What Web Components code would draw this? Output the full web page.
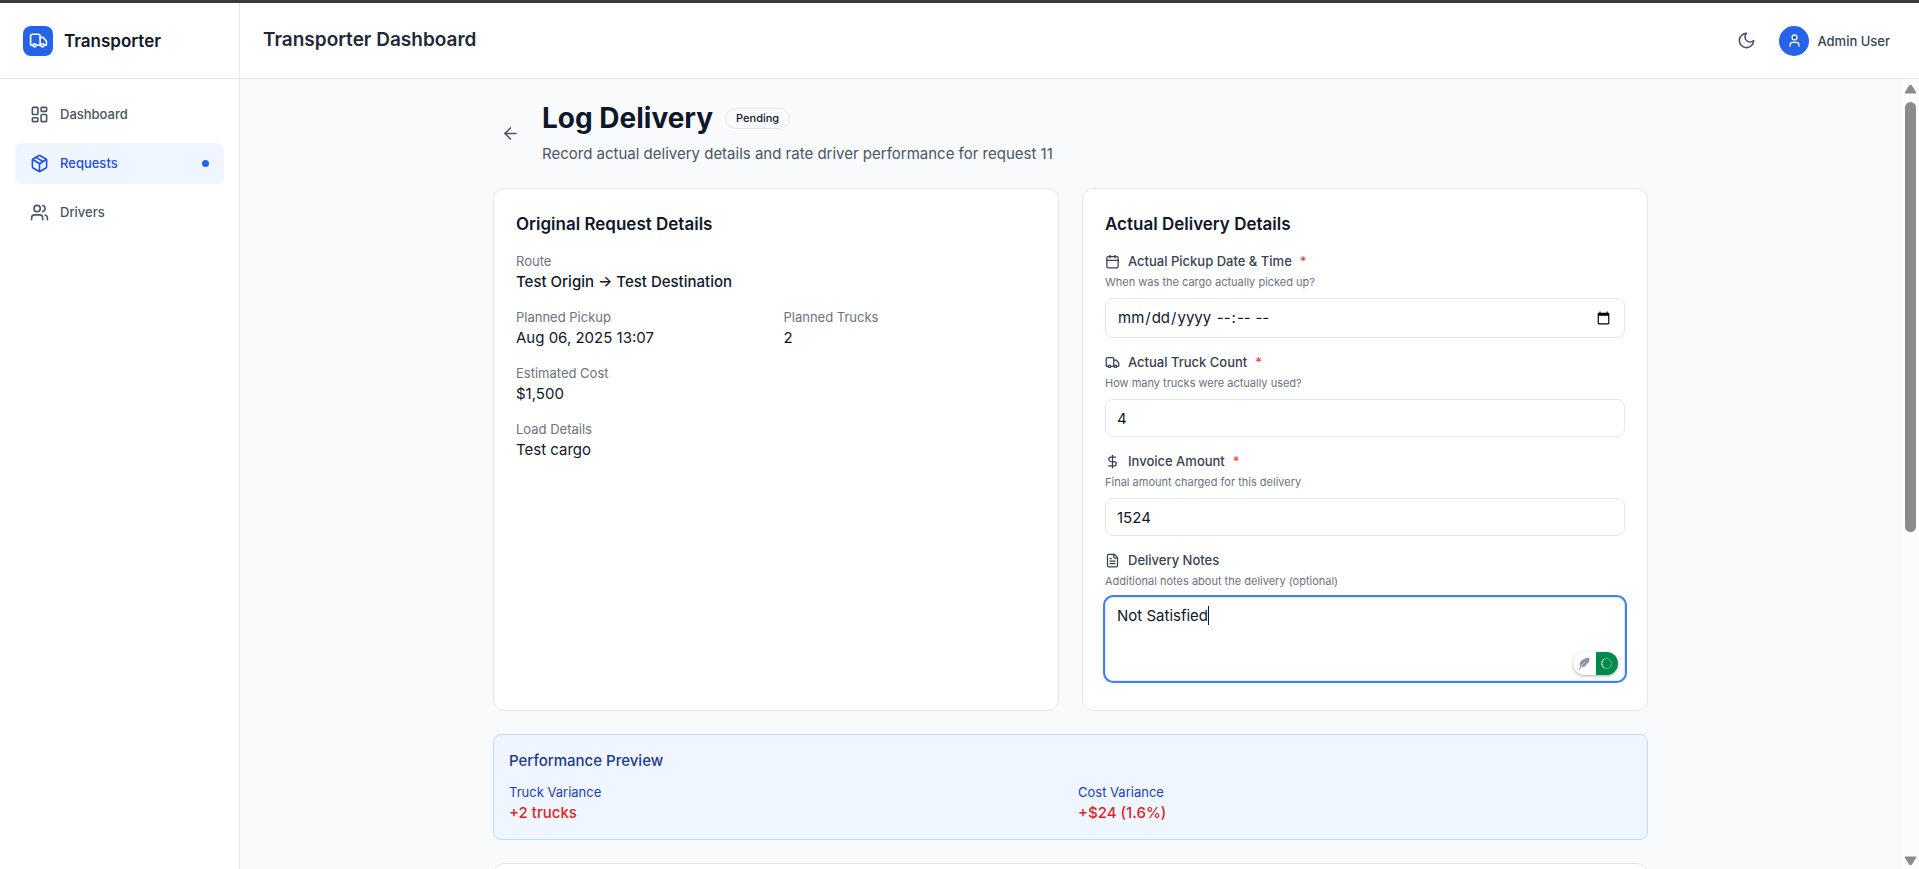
<!DOCTYPE html>
<html lang="en">
<head>
<meta charset="utf-8">
<title>Transporter Dashboard</title>
<style>
  html, body { margin: 0; height: 100%; overflow: hidden; }
  body { font: 15px/22px Inter, "Liberation Sans", sans-serif; color: #0f172a; background: #f8fafc; }
</style>
</head>
<body>
<transporter-app></transporter-app>
<script>
const ICONS = {
  truck: '<path d="M14 18V6a2 2 0 0 0-2-2H4a2 2 0 0 0-2 2v11a1 1 0 0 0 1 1h2"/><path d="M15 18H9"/><path d="M19 18h2a1 1 0 0 0 1-1v-3.65a1 1 0 0 0-.22-.624l-3.48-4.35A1 1 0 0 0 17.52 8H14"/><circle cx="17" cy="18" r="2"/><circle cx="7" cy="18" r="2"/>',
  dashboard: '<rect width="7" height="9" x="3" y="3" rx="1"/><rect width="7" height="5" x="14" y="3" rx="1"/><rect width="7" height="9" x="14" y="12" rx="1"/><rect width="7" height="5" x="3" y="16" rx="1"/>',
  box: '<path d="M11 21.73a2 2 0 0 0 2 0l7-4A2 2 0 0 0 21 16V8a2 2 0 0 0-1-1.73l-7-4a2 2 0 0 0-2 0l-7 4A2 2 0 0 0 3 8v8a2 2 0 0 0 1 1.73z"/><path d="M12 22V12"/><path d="m3.3 7 7.7 4.73a2 2 0 0 0 2 0L20.7 7"/><path d="m7.5 4.27 9 5.15"/>',
  users: '<path d="M16 21v-2a4 4 0 0 0-4-4H6a4 4 0 0 0-4 4v2"/><circle cx="9" cy="7" r="4"/><path d="M22 21v-2a4 4 0 0 0-3-3.87"/><path d="M16 3.13a4 4 0 0 1 0 7.75"/>',
  user: '<path d="M19 21v-2a4 4 0 0 0-4-4H9a4 4 0 0 0-4 4v2"/><circle cx="12" cy="7" r="4"/>',
  moon: '<path d="M12 3a6 6 0 0 0 9 9 9 9 0 1 1-9-9Z"/>',
  back: '<path d="m12 19-7-7 7-7"/><path d="M19 12H5"/>',
  calendar: '<path d="M8 2v4"/><path d="M16 2v4"/><rect width="18" height="18" x="3" y="4" rx="2"/><path d="M3 10h18"/>',
  dollar: '<path d="M12 2v20"/><path d="M17 5H9.500a3.500 3.500 0 0 0 0 7h5a3.500 3.500 0 0 1 0 7H6"/>',
  file: '<path d="M15 2H6a2 2 0 0 0-2 2v16a2 2 0 0 0 2 2h12a2 2 0 0 0 2-2V7Z"/><path d="M14 2v4a2 2 0 0 0 2 2h4"/><path d="M10 9H8"/><path d="M16 13H8"/><path d="M16 17H8"/>'
};

function define(name, render, setup) {
  customElements.define(name, class extends HTMLElement {
    connectedCallback() {
      if (this.shadowRoot) return;
      this.attachShadow({ mode: 'open' }).innerHTML = render(this);
      if (setup) setup(this.shadowRoot, this);
    }
  });
}
const attr = (el, name) => el.getAttribute(name) || '';

define('line-icon', el => `
  <style>
    :host { display: block; flex: none; width: 15px; height: 15px; }
    svg { display: block; width: 100%; height: 100%; fill: none; stroke: currentColor; stroke-width: 2; stroke-linecap: round; stroke-linejoin: round; }
  </style>
  <svg viewBox="0 0 24 24" aria-hidden="true">${ICONS[attr(el, 'name')]}</svg>`);

define('nav-item', el => `
  <style>
    :host { display: block; }
    a { display: flex; align-items: center; gap: 11px; height: 41px; padding: 0 15px; border-radius: 8px; color: #4b5563; font-size: 13px; font-weight: 500; line-height: 19px; text-decoration: none; }
    line-icon { width: 19px; height: 19px; }
    i { width: 7px; height: 7px; margin-left: auto; border-radius: 50%; background: #2563eb; display: none; }
    :host([active]) a { background: #eff6ff; color: #1d4ed8; }
    :host([active]) i { display: block; }
  </style>
  <a href="#"><line-icon name="${attr(el, 'icon')}"></line-icon><slot></slot><i></i></a>`);

define('side-bar', () => `
  <style>
    :host { display: flex; flex-direction: column; flex: none; box-sizing: border-box; width: 240px; background: #fff; border-right: 1px solid #e5e7eb; }
    .brand { display: flex; align-items: center; gap: 11px; box-sizing: border-box; height: 76px; padding: 0 23px; border-bottom: 1px solid #e5e7eb; font-size: 17px; font-weight: 600; color: #111827; }
    .logo { display: grid; place-items: center; width: 30px; height: 30px; border-radius: 8px; background: #2563eb; color: #fff; }
    .logo line-icon { width: 19px; height: 19px; }
    nav { display: flex; flex-direction: column; gap: 8px; padding: 15px; }
  </style>
  <div class="brand"><span class="logo"><line-icon name="truck"></line-icon></span>Transporter</div>
  <nav aria-label="Main">
    <nav-item icon="dashboard">Dashboard</nav-item>
    <nav-item icon="box" active>Requests</nav-item>
    <nav-item icon="users">Drivers</nav-item>
  </nav>`);

define('top-bar', () => `
  <style>
    :host { display: flex; align-items: center; justify-content: space-between; flex: none; box-sizing: border-box; height: 76px; padding: 0 29px 0 23px; background: #fff; border-bottom: 1px solid #e5e7eb; }
    h1 { margin: 0; padding-bottom: 2px; font-size: 19px; font-weight: 600; line-height: 26px; color: #1f2937; }
    .tools, .account { display: flex; align-items: center; }
    .tools { gap: 15px; }
    .account { gap: 8px; font-size: 13px; font-weight: 500; color: #374151; }
    button { padding: 8px; border: 0; background: none; color: #4b5563; }
    button line-icon { width: 19px; height: 19px; }
    .avatar { display: grid; place-items: center; width: 30px; height: 30px; border-radius: 50%; background: #2563eb; color: #fff; }
  </style>
  <h1>Transporter Dashboard</h1>
  <div class="tools">
    <button type="button" aria-label="Dark mode"><line-icon name="moon"></line-icon></button>
    <div class="account"><span class="avatar"><line-icon name="user"></line-icon></span>Admin User</div>
  </div>`);

define('page-heading', el => `
  <style>
    :host { display: flex; align-items: center; gap: 14px; }
    button { padding: 8px; border: 0; background: none; color: #4b5563; }
    line-icon { width: 19px; height: 19px; }
    .line { display: flex; align-items: center; gap: 12px; }
    h2 { margin: 0; font-size: 28px; font-weight: 700; line-height: 34px; }
    .badge { padding: 2px 10px; border: 1px solid #e5e7eb; border-radius: 11px; font-size: 11px; font-weight: 500; line-height: 15px; }
    p { margin: 8px 0 0; color: #4b5563; }
  </style>
  <button type="button" aria-label="Back"><line-icon name="back"></line-icon></button>
  <div>
    <div class="line"><h2>${attr(el, 'heading')}</h2><span class="badge">${attr(el, 'status')}</span></div>
    <p><slot></slot></p>
  </div>`);

define('info-card', el => `
  <style>
    :host { display: block; box-sizing: border-box; padding: 22px; background: #fff; border: 1px solid #e5e7eb; border-radius: 11px; }
    h3 { margin: 0 0 15px; font-size: 17px; font-weight: 600; line-height: 26px; }
    .body { display: grid; gap: 15px; }
  </style>
  ${el.hasAttribute('heading') ? `<h3>${attr(el, 'heading')}</h3>` : ''}<div class="body"><slot></slot></div>`);

define('data-pair', el => `
  <style>
    :host { display: block; }
    .label { font-size: 13px; line-height: 19px; color: var(--label, #6b7280); }
    .value { line-height: 22px; color: var(--value, #0f172a); font-weight: var(--weight, 400); }
  </style>
  <div class="label">${attr(el, 'label')}</div><div class="value"><slot></slot></div>`);

define('form-field', el => {
  const type = attr(el, 'type');
  const value = attr(el, 'value');
  const control = type === 'textarea'
    ? `<textarea id="control" aria-describedby="help">${value}</textarea><i class="caret"></i><writing-helper></writing-helper>`
    : `<input id="control" type="${type}" value="${value}" aria-describedby="help">`;
  return `
  <style>
    :host { display: block; }
    label { display: flex; align-items: center; gap: 8px; font-size: 13px; font-weight: 500; line-height: 19px; color: #374151; }
    label span { color: #ef4444; }
    p { margin: 4px 0 8px; font-size: 11px; line-height: 15px; color: #6b7280; }
    .control { position: relative; }
    input, textarea { display: block; box-sizing: border-box; width: 100%; height: 38px; margin: 0; padding: 7px 11px; border: 1px solid #e5e7eb; border-radius: 8px; background: #fff; color: #0f172a; font: inherit; outline: none; }
    input[type="datetime-local"] { height: 40px; }
    /* The year field covers the comma that some locales put between date and time. */
    input::-webkit-datetime-edit-year-field { position: relative; margin-right: -5px; background: #fff; }
    input::-webkit-inner-spin-button { appearance: none; margin: 0; }
    textarea { height: 84px; margin-bottom: 7px; resize: none; box-shadow: 0 0 0 2px #3b82f6; caret-color: transparent; }
    .caret { position: absolute; top: 9px; left: 103px; width: 1px; height: 19px; background: #0f172a; }
    writing-helper { position: absolute; right: 7px; bottom: 6px; }
  </style>
  <label for="control"><line-icon name="${attr(el, 'icon')}"></line-icon>${attr(el, 'label')}${el.hasAttribute('required') ? '<span>*</span>' : ''}</label>
  <p id="help">${attr(el, 'help')}</p>
  <div class="control">${control}</div>`;
}, root => {
  const area = root.querySelector('textarea');
  if (!area) return;
  area.addEventListener('input', () => {
    root.querySelector('.caret').hidden = true;
    root.querySelector('.caret').style.display = 'none';
    area.style.caretColor = 'auto';
  });
  area.focus({ preventScroll: true });
  area.setSelectionRange(area.value.length, area.value.length);
});

define('writing-helper', () => `
  <style>
    :host { display: flex; width: 45px; height: 23px; border-radius: 12px; overflow: hidden; background: #fff; box-shadow: 0 1px 3px #0005; }
    span { flex: 1; display: grid; place-items: center; }
    .state { background: #028a4a; }
    svg { display: block; }
  </style>
  <span><svg width="12" height="13" viewBox="0 0 12 13"><path d="M1 12.500 2 9C1 5.500 3.500 1.500 11.300.5c.5 3-.4 4.700-1.500 6l-2.300.6 1.400.4C7.300 9.500 5.300 10.300 3.300 9.800L1.800 12.700Z" fill="#8891a7"/><path d="M2.500 10C3.800 7.900 5.300 6.300 7 5.200" fill="none" stroke="#fff" stroke-width=".6"/></svg></span>
  <span class="state"><svg width="13" height="13" viewBox="0 0 13 13" fill="none"><circle cx="6.500" cy="6.500" r="5" stroke="#5fb78a"/><path d="M4.500 10.900A5 5 0 0 1 4.500 2" stroke="#d5eee0"/></svg></span>`);

define('performance-preview', () => `
  <style>
    :host { display: block; padding: 15px; border: 1px solid #bfdbfe; border-radius: 8px; background: #eff6ff; --label: #1e40af; --value: #dc2626; --weight: 500; }
    h3 { margin: 0 0 11px; font-size: 15px; font-weight: 500; line-height: 22px; color: #1e3a8a; }
    .grid { display: grid; grid-template-columns: 1fr 1fr; gap: 15px; }
  </style>
  <h3>Performance Preview</h3>
  <div class="grid">
    <data-pair label="Truck Variance">+2 trucks</data-pair>
    <data-pair label="Cost Variance">+$24 (1.6%)</data-pair>
  </div>`);

define('scroll-track', () => `
  <style>
    :host { display: flex; flex-direction: column; align-items: center; flex: none; box-sizing: border-box; width: 18px; padding: 5px 0 3px 1px; background: #fcfcfc; }
    svg { display: block; flex: none; width: 13px; height: 10px; fill: #8b8b8b; stroke: #8b8b8b; stroke-linejoin: round; }
    .rail { display: flex; flex-direction: column; flex: 1; margin: 8px 0 7px; }
    .thumb { flex: 23; width: 11px; border-radius: 6px; background: #8b8b8b; }
    .rest { flex: 17; }
  </style>
  <svg viewBox="0 0 13 10"><path d="M1 9h11L7.500 1.500h-2Z"/></svg>
  <div class="rail"><div class="thumb"></div><div class="rest"></div></div>
  <svg viewBox="0 0 13 10"><path d="M1 1h11L7.500 8.500h-2Z"/></svg>`);

define('transporter-app', () => `
  <style>
    :host { display: flex; box-sizing: border-box; height: 100vh; border-top: 3px solid #3b3b3b; }
    .column { display: flex; flex-direction: column; flex: 1; min-width: 0; }
    .area { display: flex; flex: 1; min-height: 0; }
    main { flex: 1; min-width: 0; overflow: hidden; padding: 22px 23px 0; }
    .content { display: grid; gap: 23px; max-width: 1155px; margin: 0 auto; }
    .cards, .pair { display: grid; grid-template-columns: 1fr 1fr; }
    .cards { gap: 23px; }
    .pair { gap: 15px; }
    .route { --weight: 500; }
  </style>
  <side-bar></side-bar>
  <div class="column">
    <top-bar></top-bar>
    <div class="area">
      <main>
        <div class="content">
          <page-heading heading="Log Delivery" status="Pending">Record actual delivery details and rate driver performance for request 11</page-heading>
          <div class="cards">
            <info-card heading="Original Request Details">
              <data-pair class="route" label="Route">Test Origin → Test Destination</data-pair>
              <div class="pair">
                <data-pair label="Planned Pickup">Aug 06, 2025 13:07</data-pair>
                <data-pair label="Planned Trucks">2</data-pair>
              </div>
              <data-pair label="Estimated Cost">$1,500</data-pair>
              <data-pair label="Load Details">Test cargo</data-pair>
            </info-card>
            <info-card heading="Actual Delivery Details">
              <form-field icon="calendar" label="Actual Pickup Date &amp; Time" help="When was the cargo actually picked up?" type="datetime-local" required></form-field>
              <form-field icon="truck" label="Actual Truck Count" help="How many trucks were actually used?" type="number" value="4" required></form-field>
              <form-field icon="dollar" label="Invoice Amount" help="Final amount charged for this delivery" type="number" value="1524" required></form-field>
              <form-field icon="file" label="Delivery Notes" help="Additional notes about the delivery (optional)" type="textarea" value="Not Satisfied"></form-field>
            </info-card>
          </div>
          <performance-preview></performance-preview>
          <info-card></info-card>
        </div>
      </main>
      <scroll-track></scroll-track>
    </div>
  </div>`);
</script>
</body>
</html>
